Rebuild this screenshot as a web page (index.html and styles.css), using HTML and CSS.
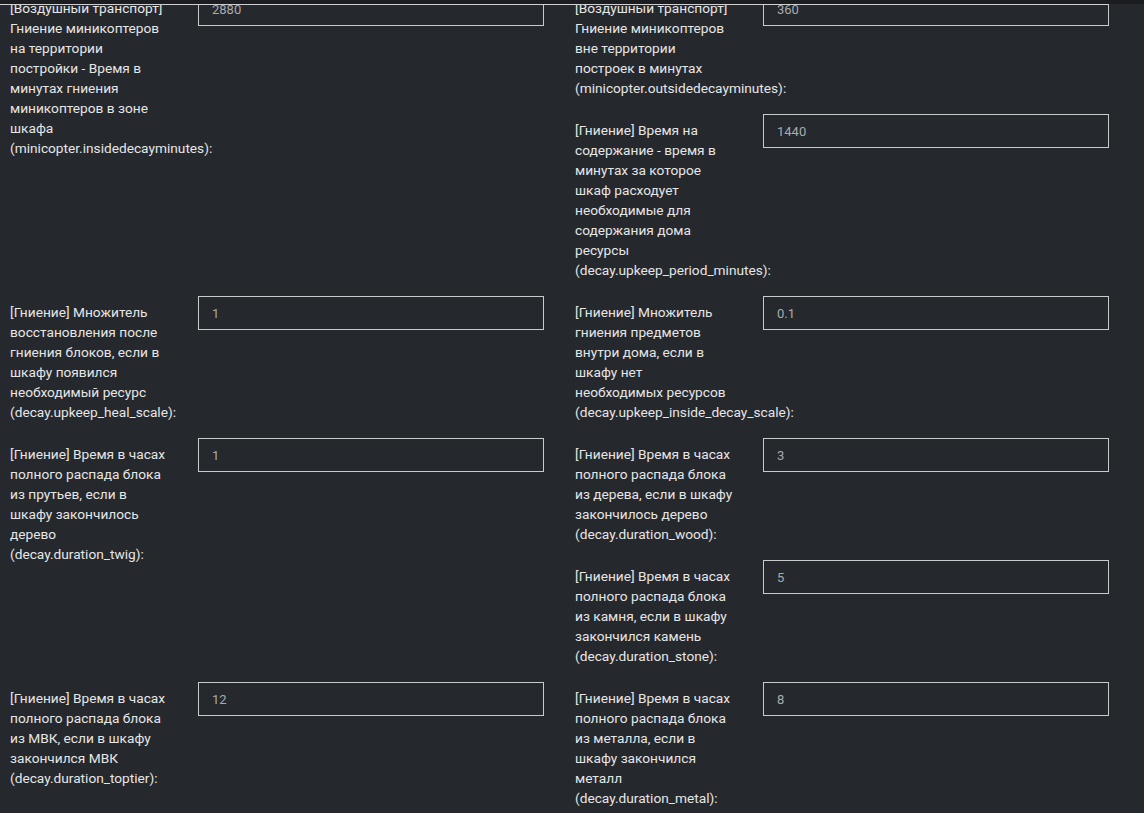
FILE: index.html
```html
<!DOCTYPE html>
<html lang="ru">
<head>
<meta charset="utf-8">
<title>Настройки</title>
<link rel="stylesheet" href="styles.css">
</head>
<body>
<div class="topbar"><div class="topline"></div></div>
<main class="settings">
  <div class="cell">
    <div class="field">
      <label class="label">[Воздушный транспорт]<br>Гниение миникоптеров<br>на территории<br>постройки - Время в<br>минутах гниения<br>миникоптеров в зоне<br>шкафа<br>(minicopter.insidedecayminutes):</label>
      <input class="input" type="text" value="2880">
    </div>
  </div>
  <div class="cell">
    <div class="field">
      <label class="label">[Воздушный транспорт]<br>Гниение миникоптеров<br>вне территории<br>построек в минутах<br>(minicopter.outsidedecayminutes):</label>
      <input class="input" type="text" value="360">
    </div>
    <div class="field">
      <label class="label">[Гниение] Время на<br>содержание - время в<br>минутах за которое<br>шкаф расходует<br>необходимые для<br>содержания дома<br>ресурсы<br>(decay.upkeep_period_minutes):</label>
      <input class="input" type="text" value="1440">
    </div>
  </div>
  <div class="cell">
    <div class="field">
      <label class="label">[Гниение] Множитель<br>восстановления после<br>гниения блоков, если в<br>шкафу появился<br>необходимый ресурс<br>(decay.upkeep_heal_scale):</label>
      <input class="input" type="text" value="1">
    </div>
  </div>
  <div class="cell">
    <div class="field">
      <label class="label">[Гниение] Множитель<br>гниения предметов<br>внутри дома, если в<br>шкафу нет<br>необходимых ресурсов<br>(decay.upkeep_inside_decay_scale):</label>
      <input class="input" type="text" value="0.1">
    </div>
  </div>
  <div class="cell">
    <div class="field">
      <label class="label">[Гниение] Время в часах<br>полного распада блока<br>из прутьев, если в<br>шкафу закончилось<br>дерево<br>(decay.duration_twig):</label>
      <input class="input" type="text" value="1">
    </div>
  </div>
  <div class="cell">
    <div class="field">
      <label class="label">[Гниение] Время в часах<br>полного распада блока<br>из дерева, если в шкафу<br>закончилось дерево<br>(decay.duration_wood):</label>
      <input class="input" type="text" value="3">
    </div>
    <div class="field">
      <label class="label">[Гниение] Время в часах<br>полного распада блока<br>из камня, если в шкафу<br>закончился камень<br>(decay.duration_stone):</label>
      <input class="input" type="text" value="5">
    </div>
  </div>
  <div class="cell">
    <div class="field">
      <label class="label">[Гниение] Время в часах<br>полного распада блока<br>из МВК, если в шкафу<br>закончился МВК<br>(decay.duration_toptier):</label>
      <input class="input" type="text" value="12">
    </div>
  </div>
  <div class="cell">
    <div class="field">
      <label class="label">[Гниение] Время в часах<br>полного распада блока<br>из металла, если в<br>шкафу закончился<br>металл<br>(decay.duration_metal):</label>
      <input class="input" type="text" value="8">
    </div>
  </div>
</main>
</body>
</html>
```

FILE: styles.css
```css
html, body {
  margin: 0;
  padding: 0;
  background: #25282d;
  overflow: hidden;
}

body {
  font-family: Roboto, "Liberation Sans", Arial, sans-serif;
  font-size: 13.7px;
  color: #e6e6e6;
  height: 813px;
  position: relative;
}

.topbar {
  position: absolute;
  top: 0;
  left: 0;
  width: 100%;
  height: 4px;
  background: #1b1d21;
  z-index: 2;
}

.topline {
  position: absolute;
  top: 4px;
  left: 0;
  width: 1109px;
  height: 1px;
  background: #cfd0d2;
}

.settings {
  display: grid;
  grid-template-columns: 565px 565px;
  row-gap: 16px;
  margin-top: -8px;
}

.cell {
  display: flex;
  flex-direction: column;
  gap: 16px;
  padding-left: 10px;
}

.field {
  display: flex;
  align-items: flex-start;
}

.label {
  width: 188px;
  flex: none;
  padding-top: 6px;
  line-height: 20px;
  white-space: nowrap;
}

.input {
  flex: none;
  box-sizing: border-box;
  width: 346px;
  height: 34px;
  margin: 0;
  padding: 0 13px;
  border: 1px solid #c9cacc;
  border-radius: 0;
  background: transparent;
  color: #a9abad;
  font-family: Roboto, "Liberation Sans", Arial, sans-serif;
  font-size: 13px;
  outline: none;
}
```
